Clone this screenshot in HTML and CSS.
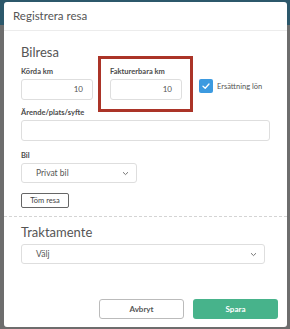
FILE: index.html
```html
<!DOCTYPE html>
<html lang="sv">
<head>
    <meta charset="UTF-8">
    <meta name="viewport" content="width=device-width, initial-scale=1.0">
    <title>Registrera resa</title>
    <link rel="stylesheet" href="styles.css">
</head>
<body>

<div class="modal">
    <div class="modal-header">Registrera resa</div>

    <div class="section">
        <h2 class="section-title">Bilresa</h2>

        <div class="km-row">
            <div class="field field-small">
                <label class="field-label">Körda km</label>
                <div class="input input-num">10</div>
            </div>
            <div class="field field-small highlighted">
                <label class="field-label">Fakturerbara km</label>
                <div class="input input-num">10</div>
            </div>
            <div class="check">
                <span class="check-box">
                    <svg width="10" height="10" viewBox="0 0 10 10"><path d="M2 5.2 L4.2 7.2 L8 3" fill="none" stroke="#fff" stroke-width="1.3" stroke-linecap="round" stroke-linejoin="round"/></svg>
                </span>
                <span class="check-label">Ersättning lön</span>
            </div>
        </div>

        <div class="field field-gap">
            <label class="field-label">Ärende/plats/syfte</label>
            <div class="input"></div>
        </div>

        <div class="field field-gap-lg">
            <label class="field-label">Bil</label>
            <div class="select select-car">
                <span>Privat bil</span>
                <svg width="7" height="5" viewBox="0 0 7 5"><path d="M1 1.2 L3.5 3.6 L6 1.2" fill="none" stroke="#666" stroke-width="0.9"/></svg>
            </div>
        </div>

        <button class="clear-btn">Töm resa</button>
    </div>

    <div class="section section-dashed">
        <h2 class="section-title">Traktamente</h2>
        <div class="select select-wide">
            <span>Välj</span>
            <svg width="7" height="5" viewBox="0 0 7 5"><path d="M1 1.2 L3.5 3.6 L6 1.2" fill="none" stroke="#666" stroke-width="0.9"/></svg>
        </div>
    </div>

    <div class="modal-footer">
        <button class="btn btn-cancel">Avbryt</button>
        <button class="btn btn-save">Spara</button>
    </div>
</div>

</body>
</html>
```

FILE: styles.css
```css
body {
    font-family: 'Lato', 'Liberation Sans', sans-serif;
    margin: 0;
    height: 329px;
    overflow: hidden;
    background: linear-gradient(#2c586b 0, #2c586b 25px, #6d6d6d 25px);
}

.modal {
    display: flex;
    flex-direction: column;
    width: 283px;
    height: 325px;
    margin: 2px 0 0 4px;
    background-color: #fff;
    border-radius: 3px;
    box-sizing: border-box;
}

.modal-header {
    height: 28px;
    line-height: 28px;
    padding-left: 9px;
    font-size: 11.5px;
    color: #555;
    border-bottom: 1px solid #ececec;
}

.section {
    padding: 0 17px;
}

.section-title {
    margin: 14px 0 0;
    font-size: 13px;
    line-height: 14px;
    font-weight: 400;
    color: #555;
}

.km-row {
    display: flex;
    align-items: flex-start;
    margin-top: 8px;
}

.field-small {
    width: 72px;
    margin-right: 17px;
}

.field-label {
    display: block;
    font-size: 7.5px;
    line-height: 10px;
    font-weight: 700;
    color: #4a4a4a;
    margin-bottom: 2px;
}

.input {
    height: 21px;
    border: 1px solid #dedede;
    border-radius: 3px;
    box-sizing: border-box;
}

.input-num {
    text-align: right;
    padding-right: 9px;
    font-size: 8px;
    line-height: 19px;
    color: #555;
}

.highlighted {
    position: relative;
}

.highlighted::after {
    content: '';
    position: absolute;
    top: -11px;
    left: -12px;
    right: -11px;
    bottom: -12px;
    border: 3px solid #ab3428;
}

.check {
    display: flex;
    align-items: center;
    margin-top: 12px;
}

.check-box {
    display: flex;
    align-items: center;
    justify-content: center;
    width: 14px;
    height: 14px;
    background-color: #3c9ae0;
    border-radius: 2px;
}

.check-label {
    margin-left: 4px;
    font-size: 7.5px;
    color: #555;
}

.field-gap {
    margin-top: 8px;
}

.field-gap-lg {
    margin-top: 10px;
}

.select {
    display: flex;
    align-items: center;
    justify-content: space-between;
    height: 20px;
    padding: 0 7px 0 14px;
    border: 1px solid #dedede;
    border-radius: 3px;
    box-sizing: border-box;
    font-size: 8.5px;
    color: #555;
}

.select-car {
    width: 116px;
}

.clear-btn {
    display: block;
    margin-top: 10px;
    width: 48px;
    height: 15px;
    padding: 0;
    font-family: inherit;
    font-size: 7.5px;
    color: #444;
    background-color: #fff;
    border: 1px solid #666;
    border-radius: 2px;
}

.section-dashed {
    margin-top: 8px;
    border-top: 1px dashed #d4d4d4;
}

.section-dashed .section-title {
    margin-top: 8px;
}

.select-wide {
    margin-top: 5px;
    width: 244px;
}

.modal-footer {
    display: flex;
    justify-content: flex-end;
    gap: 9px;
    margin-top: auto;
    padding: 0 9px 8px 0;
}

.btn {
    width: 85px;
    height: 20px;
    padding: 0;
    font-family: inherit;
    font-size: 8px;
    font-weight: 700;
    border-radius: 3px;
}

.btn-cancel {
    background-color: #fff;
    color: #555;
    border: 1px solid #bbb;
}

.btn-save {
    background-color: #47b38b;
    color: #fff;
    border: none;
}
```
